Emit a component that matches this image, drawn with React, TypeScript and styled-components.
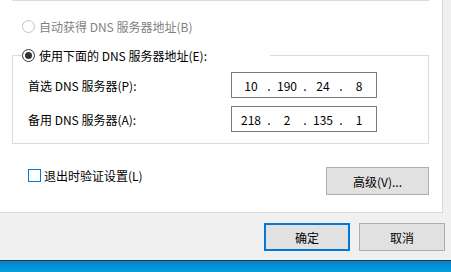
import React from "react";
import styled, { createGlobalStyle } from "styled-components";

const Global = createGlobalStyle`
  html, body { margin: 0; padding: 0; background: #f0f0f0; }
  body {
    font-family: "Noto Sans CJK SC", "Noto Sans", sans-serif;
    font-size: 12px;
    color: #000;
  }
  * { box-sizing: border-box; }
`;

const Window = styled.div`
  width: 451px;
  height: 272px;
  display: flex;
  flex-direction: column;
  background: #f0f0f0;
  overflow: hidden;
`;

const Body = styled.div`
  display: flex;
  height: 213px;
  flex: none;
`;

const Page = styled.div`
  width: 443px;
  height: 213px;
  background: #fff;
  border-right: 1px solid #d9d9d9;
  border-bottom: 1px solid #d9d9d9;
  display: flex;
  flex-direction: column;
`;

const Side = styled.div`
  flex: 1;
  background: #f0f0f0;
`;

const PrevGroupEdge = styled.div`
  margin: 0 13px 0 12px;
  border-top: 1px solid #dcdcdc;
  flex: none;
`;

const RadioRow = styled.label<{ $disabled?: boolean; $top?: number; $left?: number }>`
  display: flex;
  align-items: center;
  gap: 4px;
  height: 17px;
  line-height: 17px;
  white-space: nowrap;
  margin-top: ${(p) => p.$top ?? 0}px;
  padding-left: ${(p) => p.$left ?? 0}px;
  color: ${(p) => (p.$disabled ? "#7f7f7f" : "#000")};
`;

const RadioCircle = styled.span<{ $checked?: boolean; $disabled?: boolean }>`
  width: 13px;
  height: 13px;
  border-radius: 50%;
  border: 1px solid ${(p) => (p.$disabled ? "#c2c2c2" : "#333")};
  background: #fff;
  display: flex;
  align-items: center;
  justify-content: center;
  flex: none;
  &::after {
    content: "";
    display: ${(p) => (p.$checked ? "block" : "none")};
    width: 7px;
    height: 7px;
    border-radius: 50%;
    background: #333;
  }
`;

const Group = styled.fieldset`
  margin: 12px 13px 0 12px;
  padding: 0;
  border: 1px solid #dcdcdc;
  min-width: 0;
`;

const Legend = styled.legend`
  margin-left: 9px;
  padding: 0;
  width: 248px;
  height: 17px;
  background: #fff;
`;

const Fields = styled.div`
  display: grid;
  grid-template-columns: 203px 146px;
  row-gap: 8px;
  align-items: center;
  padding: 8px 0 11px 15px;
`;

const FieldLabel = styled.span`
  line-height: 17px;
  white-space: nowrap;
`;

const IpBox = styled.div`
  height: 26px;
  border: 1px solid #7a7a7a;
  background: #fff;
  display: flex;
  align-items: center;
  padding-left: 4px;
  line-height: 17px;
`;

const Octet = styled.span`
  width: 30px;
  text-align: center;
`;

const Dot = styled.span`
  width: 6px;
  text-align: center;
`;

const OptionsRow = styled.div`
  display: flex;
  justify-content: space-between;
  align-items: flex-start;
  margin: 23px 13px 0 28px;
`;

const CheckLabel = styled.label`
  display: flex;
  align-items: center;
  gap: 3px;
  margin-top: 1px;
  height: 15px;
  line-height: 15px;
  white-space: nowrap;
`;

const CheckBox = styled.span`
  width: 13px;
  height: 13px;
  border: 1px solid #0078d7;
  background: #fff;
  flex: none;
`;

const Button = styled.button<{ $primary?: boolean; $w: number }>`
  width: ${(p) => p.$w}px;
  height: 28px;
  padding: 0;
  background: #e1e1e1;
  border: ${(p) => (p.$primary ? "2px solid #0078d7" : "1px solid #adadad")};
  font-family: "Noto Sans CJK SC", "Noto Sans", sans-serif;
  font-size: 12px;
  color: #000;
  line-height: 17px;
  display: flex;
  align-items: center;
  justify-content: center;
`;

const Footer = styled.div`
  height: 47px;
  flex: none;
  display: flex;
  justify-content: flex-end;
  align-items: flex-start;
  gap: 9px;
  padding: 10px 6px 0 0;
`;

const Taskbar = styled.div`
  flex: 1;
  border-top: 1px solid #2e3438;
  background: linear-gradient(#0682c8, #039fe0);
`;

const Ip = ({ parts }: { parts: string[] }) => (
  <IpBox>
    {parts.map((p, i) => (
      <React.Fragment key={i}>
        <Octet>{p}</Octet>
        {i < 3 && <Dot>.</Dot>}
      </React.Fragment>
    ))}
  </IpBox>
);

export default function App() {
  return (
    <Window>
      <Global />
      <Body>
        <Page>
          <PrevGroupEdge />
          <RadioRow $disabled $top={17} $left={22}>
            <RadioCircle $disabled />
            自动获得 DNS 服务器地址(B)
          </RadioRow>
          <Group>
            <Legend>
              <RadioRow>
                <RadioCircle $checked />
                使用下面的 DNS 服务器地址(E):
              </RadioRow>
            </Legend>
            <Fields>
              <FieldLabel>首选 DNS 服务器(P):</FieldLabel>
              <Ip parts={["10", "190", "24", "8"]} />
              <FieldLabel>备用 DNS 服务器(A):</FieldLabel>
              <Ip parts={["218", "2", "135", "1"]} />
            </Fields>
          </Group>
          <OptionsRow>
            <CheckLabel>
              <CheckBox />
              退出时验证设置(L)
            </CheckLabel>
            <Button $w={103}>高级(V)...</Button>
          </OptionsRow>
        </Page>
        <Side />
      </Body>
      <Footer>
        <Button $primary $w={86}>确定</Button>
        <Button $w={86}>取消</Button>
      </Footer>
      <Taskbar />
    </Window>
  );
}
